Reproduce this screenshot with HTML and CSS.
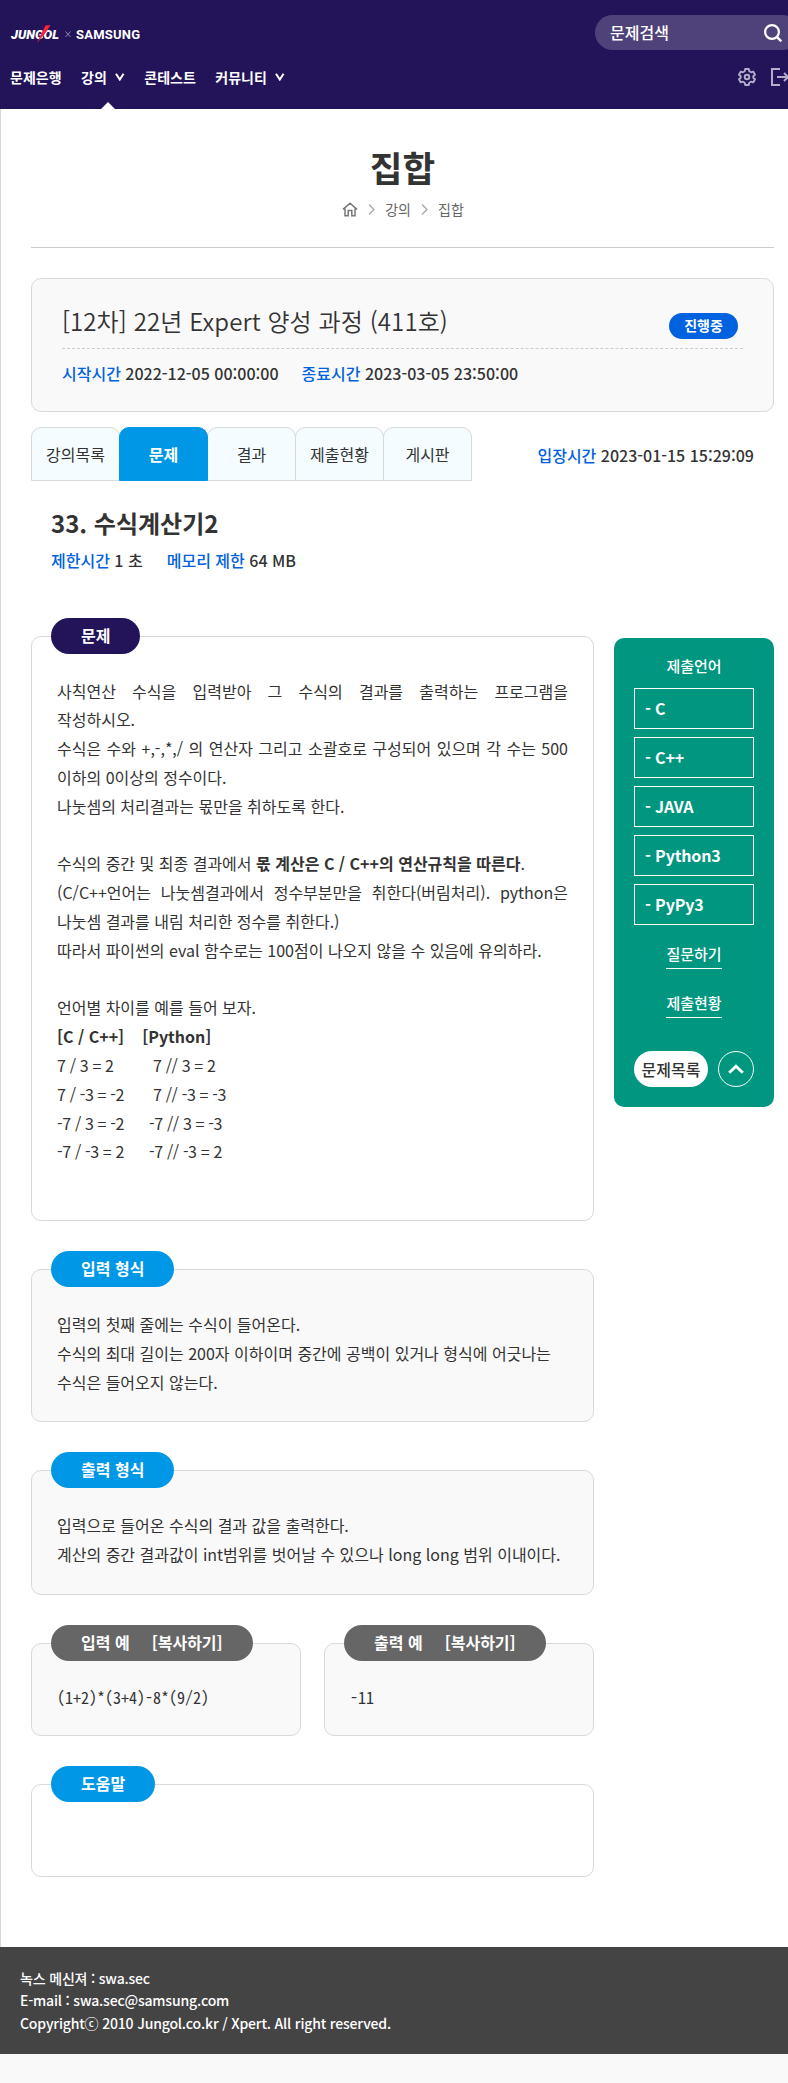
FILE: index.html
```html
<!DOCTYPE html>
<html lang="ko">
<head>
<meta charset="utf-8">
<title>JUNGOL x SAMSUNG</title>
<link rel="stylesheet" href="styles.css">
</head>
<body>
<header class="header">
  <div class="header-top">
    <a class="logo" aria-label="JUNGOL x SAMSUNG">
      <svg width="132" height="24" viewBox="0 0 132 24">
        <text class="logo-jungol" x="1" y="16.5" textLength="48" lengthAdjust="spacingAndGlyphs">JUNGOL</text>
        <path d="M35.5 3.5 L40.5 3 L36.5 9.5 L27 21 L30.5 13 Z" fill="#f5233c"/>
        <path d="M55.5 9.5 L60.5 15 M60.5 9.5 L55.5 15" stroke="#8f87b0" stroke-width="1" fill="none"/>
        <text class="logo-samsung" x="66" y="16.5" textLength="64" lengthAdjust="spacing">SAMSUNG</text>
      </svg>
    </a>
    <div class="search">
      <span>문제검색</span>
      <svg width="20" height="20" viewBox="0 0 20 20"><circle cx="9" cy="9" r="6.9" fill="none" stroke="#fff" stroke-width="2.2"/><path d="M13.8 13.8 L18.3 18.3" stroke="#fff" stroke-width="2.4"/></svg>
    </div>
  </div>
  <div class="header-bottom">
    <nav class="nav">
      <a>문제은행</a>
      <a class="current">강의<svg class="drop" width="10" height="8" viewBox="0 0 10 8"><path d="M1 .7 L4.8 6.5 L8.6 .7" fill="none" stroke="#fff" stroke-width="2"/></svg></a>
      <a>콘테스트</a>
      <a>커뮤니티<svg class="drop" width="10" height="8" viewBox="0 0 10 8"><path d="M1 .7 L4.8 6.5 L8.6 .7" fill="none" stroke="#fff" stroke-width="2"/></svg></a>
    </nav>
    <div class="tools">
      <svg width="18" height="18" viewBox="0 0 18 18" fill="none" stroke="#b3aecb" stroke-width="1.9" stroke-linejoin="round"><path d="M7.2 1 H10.8 L11.3 3.3 L13 4.3 L15.2 3.6 L17 6.7 L15.3 8.2 V9.8 L17 11.3 L15.2 14.4 L13 13.7 L11.3 14.7 L10.8 17 H7.2 L6.7 14.7 L5 13.7 L2.8 14.4 L1 11.3 L2.7 9.8 V8.2 L1 6.7 L2.8 3.6 L5 4.3 L6.7 3.3 Z"/><circle cx="9" cy="9" r="2.3"/></svg>
      <svg width="19" height="18" viewBox="0 0 19 18" fill="none" stroke="#b3aecb" stroke-width="2"><path d="M9 1 H1 V17 H9 M6 9 H17 M13 5 L17 9 L13 13"/></svg>
    </div>
  </div>
</header>

<main class="page">
  <h1 class="page-title">집합</h1>
  <div class="crumbs">
    <svg width="16" height="15" viewBox="0 0 16 15" fill="none" stroke="#777" stroke-width="1.5"><path d="M1 7.4 L8 1.2 L15 7.4 M3 6.5 V13.8 H6.2 V8.6 H9.8 V13.8 H13 V6.5"/></svg>
    <svg width="7" height="11" viewBox="0 0 7 11" fill="none" stroke="#aaa" stroke-width="1.4"><path d="M1 .6 L5.9 5.5 L1 10.4"/></svg>
    <span>강의</span>
    <svg width="7" height="11" viewBox="0 0 7 11" fill="none" stroke="#aaa" stroke-width="1.4"><path d="M1 .6 L5.9 5.5 L1 10.4"/></svg>
    <span>집합</span>
  </div>

  <section class="course">
    <div class="course-head">
      <h2>[12차] 22년 Expert 양성 과정 (411호)</h2>
      <span class="badge">진행중</span>
    </div>
    <p class="facts"><span><b>시작시간</b> 2022-12-05 00:00:00</span><span><b>종료시간</b> 2023-03-05 23:50:00</span></p>
  </section>

  <div class="tab-row">
    <div class="tabs">
      <a>강의목록</a><a class="active">문제</a><a>결과</a><a>제출현황</a><a>게시판</a>
    </div>
    <p class="facts"><span><b>입장시간</b> 2023-01-15 15:29:09</span></p>
  </div>

  <div class="problem-head">
    <h3>33. 수식계산기2</h3>
    <p class="facts"><span><b>제한시간</b> 1 초</span><span><b>메모리 제한</b> 64 MB</span></p>
  </div>

  <div class="columns">
    <div class="main">
      <section class="box plain">
        <h4 class="pill navy">문제</h4>
        <div class="justify">
          <p>사칙연산 수식을 입력받아 그 수식의 결과를 출력하는 프로그램을 작성하시오.</p>
          <p>수식은 수와 +,-,*,/ 의 연산자 그리고 소괄호로 구성되어 있으며 각 수는 500 이하의 0이상의 정수이다.</p>
          <p>나눗셈의 처리결과는 몫만을 취하도록 한다.</p>
          <p>&nbsp;</p>
          <p>수식의 중간 및 최종 결과에서 <strong>몫 계산은 C / C++의 연산규칙을 따른다</strong>.</p>
          <p>(C/C++언어는 나눗셈결과에서 정수부분만을 취한다(버림처리). python은 나눗셈 결과를 내림 처리한 정수를 취한다.)</p>
          <p>따라서 파이썬의 eval 함수로는 100점이 나오지 않을 수 있음에 유의하라.</p>
          <p>&nbsp;</p>
          <p>언어별 차이를 예를 들어 보자.</p>
          <p class="compare-head"><strong>[C / C++]</strong><strong>[Python]</strong></p>
          <div class="compare">
            <span>7 / 3 = 2</span><span class="indent">7 // 3 = 2</span>
            <span>7 / -3 = -2</span><span class="indent">7 // -3 = -3</span>
            <span>-7 / 3 = -2</span><span>-7 // 3 = -3</span>
            <span>-7 / -3 = 2</span><span>-7 // -3 = 2</span>
          </div>
          <p>&nbsp;</p>
        </div>
      </section>
      <section class="box">
        <h4 class="pill">입력 형식</h4>
        <p>입력의 첫째 줄에는 수식이 들어온다.</p>
        <p>수식의 최대 길이는 200자 이하이며 중간에 공백이 있거나 형식에 어긋나는 수식은 들어오지 않는다.</p>
      </section>
      <section class="box">
        <h4 class="pill">출력 형식</h4>
        <p>입력으로 들어온 수식의 결과 값을 출력한다.</p>
        <p>계산의 중간 결과값이 int범위를 벗어날 수 있으나 long long 범위 이내이다.</p>
      </section>
      <div class="samples">
        <section class="box">
          <h4 class="pill gray"><span>입력 예</span><span>[복사하기]</span></h4>
          <pre>(1+2)*(3+4)-8*(9/2)</pre>
        </section>
        <section class="box">
          <h4 class="pill gray"><span>출력 예</span><span>[복사하기]</span></h4>
          <pre>-11</pre>
        </section>
      </div>
      <section class="box plain">
        <h4 class="pill">도움말</h4>
        <pre> </pre>
      </section>
    </div>

    <aside class="side">
      <p class="side-title">제출언어</p>
      <ul class="langs">
        <li>- C</li><li>- C++</li><li>- JAVA</li><li>- Python3</li><li>- PyPy3</li>
      </ul>
      <a class="side-link">질문하기</a>
      <a class="side-link">제출현황</a>
      <div class="side-foot">
        <a class="list-btn">문제목록</a>
        <a class="up-btn"><svg width="16" height="10" viewBox="0 0 16 10"><path d="M1.2 8.7 L8 2.2 L14.8 8.7" fill="none" stroke="#fff" stroke-width="2.8"/></svg></a>
      </div>
    </aside>
  </div>
</main>

<footer class="footer">
  <p>녹스 메신져 : swa.sec</p>
  <p>E-mail : swa.sec@samsung.com</p>
  <p>Copyrightⓒ 2010 Jungol.co.kr / Xpert. All right reserved.</p>
</footer>
</body>
</html>
```
FILE: styles.css
```css
* { box-sizing: border-box; margin: 0; padding: 0; }
body {
  background: #f9f9f9;
  color: #333;
  font-family: "Noto Sans CJK KR", "Noto Sans", sans-serif;
  font-size: 16px;
  line-height: 1.8;
  word-break: keep-all;
  overflow-x: hidden;
}
svg { display: block; flex: none; }
ul { list-style: none; }

.header { height: 109px; padding-left: 10px; background: #231359; color: #fff; overflow: hidden; }
.header-top { display: flex; justify-content: space-between; width: 790px; padding-top: 15px; height: 60px; }
.logo { padding-top: 7px; }
.logo-jungol { font: italic 900 13px "Roboto", sans-serif; fill: #fff; }
.logo-samsung { font: 700 13px "Roboto", sans-serif; fill: #fff; }
.search {
  display: flex; justify-content: space-between; align-items: center; flex: none;
  width: 205px; height: 35px; padding: 0 17px 0 15px;
  border-radius: 18px; background: rgba(255, 255, 255, .2); font-size: 16px; font-weight: 500;
}
.header-bottom { display: flex; justify-content: space-between; width: 780px; height: 49px; }
.nav { display: flex; font-size: 14px; font-weight: 700; }
.nav a { position: relative; display: flex; align-items: center; gap: 8px; height: 35px; margin-right: 19.5px; }
.nav .drop { margin-top: -1px; }
.nav .current::after {
  content: ""; position: absolute; left: 20px; bottom: -14px;
  border: 7px solid transparent; border-top: 0; border-bottom-color: #fff;
}
.tools { display: flex; gap: 15px; padding-top: 8px; }

.page { height: 1838px; padding: 32px 14px 0 30px; border-left: 1px solid #d9d9d9; background: #fff; }
.page-title { font-size: 35.5px; font-weight: 700; line-height: 52px; text-align: center; }
.crumbs {
  display: flex; justify-content: center; align-items: center; gap: 10px;
  height: 55px; padding: 3px 0 24px 1px; margin-bottom: 30px;
  font-size: 14px; color: #666; border-bottom: 1px solid #ccc;
}
.course { height: 134px; padding: 23px 30px 0; border: 1px solid #d9d9d9; border-radius: 10px; background: #f9f9f9; }
.course-head { display: flex; justify-content: space-between; height: 47px; padding-right: 5px; border-bottom: 1px dashed #ccc; }
.course-head h2 { font-size: 24px; font-weight: 350; line-height: 38px; letter-spacing: .1px; }
.badge {
  width: 69px; height: 26px; margin-top: 11px; border-radius: 13px; text-align: center;
  background: #0062df; color: #fff; font-size: 14px; font-weight: 700; line-height: 25px;
}
.facts { display: flex; gap: 23px; font-weight: 500; }
.facts b { color: #0062df; font-weight: 500; }
.course .facts { padding-top: 10px; }
.tab-row { display: flex; justify-content: space-between; padding: 15px 20px 0 0; }
.tab-row .facts { padding-top: 14px; }
.tabs { display: flex; }
.tabs a {
  width: 89px; height: 54px; margin-right: -1px; border: 1px solid #d9d9d9; border-radius: 10px 10px 0 0;
  background: #f4fcff; font-size: 16px; line-height: 53px; text-align: center;
}
.tabs .active { position: relative; border-color: #0098e6; background: #0098e6; color: #fff; font-weight: 700; }
.problem-head { height: 154.8px; padding: 20px 20px 0; }
.problem-head .facts { gap: 24px; }
.problem-head h3 { font-size: 24px; font-weight: 700; line-height: 43px; padding-bottom: 2px; }

.columns { display: flex; justify-content: space-between; align-items: flex-start; }
.main { display: flex; flex-direction: column; gap: 48px; width: 563px; }
.box { position: relative; padding: 40px 25px 25px; border: 1px solid #d9d9d9; border-radius: 10px; background: #f9f9f9; }
.box.plain { padding-top: 39.8px; background: #fff; }
.pill {
  position: absolute; left: 19px; top: -19px; display: flex; gap: 22px; height: 36px; padding: 0 30px;
  border-radius: 18px; background: #0098e6; color: #fff; font-size: 16px; font-weight: 700; line-height: 35px; white-space: nowrap;
}
.pill.navy { background: #231359; }
.pill.gray { background: #666; }
.justify { text-align: justify; }
.box strong { font-weight: 700; }
.compare-head { display: flex; gap: 18px; }
.compare { display: grid; grid-template-columns: 92px auto; letter-spacing: -.35px; }
.indent { padding-left: 4px; }
.samples { display: grid; grid-template-columns: 270px 270px; justify-content: space-between; }
.box pre { height: 26px; font: 300 16px/26px "Noto Sans Mono CJK KR", "Liberation Mono", monospace; }

.side { width: 160px; height: 469px; margin-top: 2px; padding: 14px 20px 0; border-radius: 10px; background: #00967f; color: #fff; text-align: center; }
.side-title { font-size: 15px; font-weight: 500; line-height: 28px; margin-bottom: 8px; }
.langs { display: grid; gap: 8px; margin-bottom: 13px; text-align: left; }
.langs li { height: 41px; padding-left: 10px; border: 1px solid #fff; font-weight: 700; line-height: 38px; letter-spacing: -.15px; }
.side-link { display: block; width: 56px; height: 31px; margin: 0 auto 18px; border-bottom: 1px solid #fff; font-size: 15px; font-weight: 500; line-height: 31px; }
.side-foot { display: flex; justify-content: space-between; margin-top: 33px; }
.list-btn { width: 74px; height: 36px; border-radius: 18px; background: #fff; color: #333; font-weight: 500; line-height: 36px; }
.up-btn { display: flex; align-items: center; justify-content: center; width: 36px; height: 36px; border: 1px solid #fff; border-radius: 50%; }

.footer { height: 107px; padding: 20px; background: #444; color: #fff; font-size: 14px; font-weight: 500; line-height: 22.4px; letter-spacing: -.17px; }
```
